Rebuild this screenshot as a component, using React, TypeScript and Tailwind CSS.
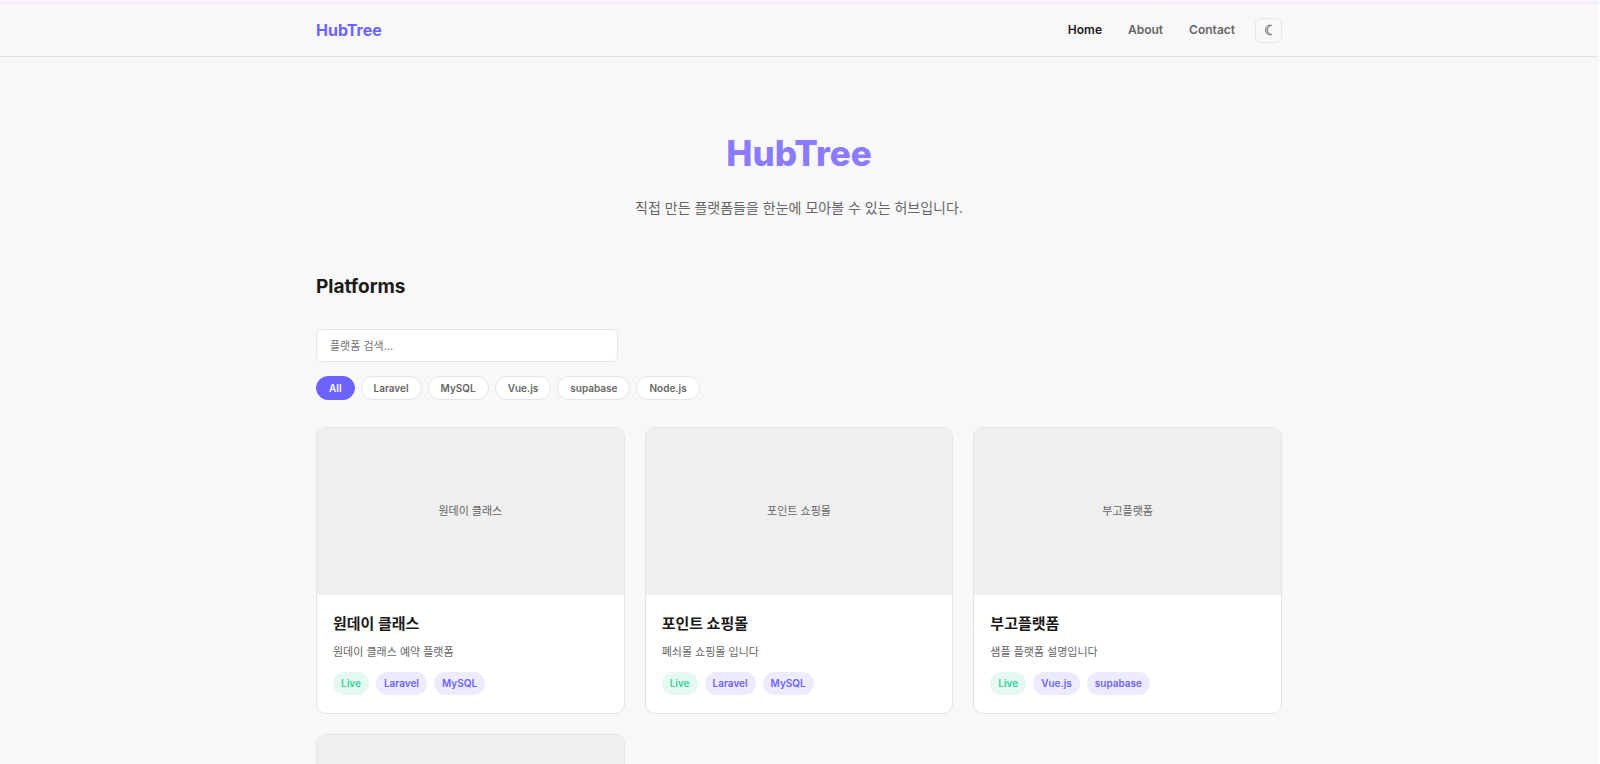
import { useState } from 'react';

type Platform = {
  name: string;
  description: string;
  tags: string[];
};

const navLinks = ['Home', 'About', 'Contact'];

const filters = ['All', 'Laravel', 'MySQL', 'Vue.js', 'supabase', 'Node.js'];

const platforms: Platform[] = [
  { name: '원데이 클래스', description: '원데이 클래스 예약 플랫폼', tags: ['Laravel', 'MySQL'] },
  { name: '포인트 쇼핑몰', description: '폐쇠몰 쇼핑몰 입니다', tags: ['Laravel', 'MySQL'] },
  { name: '부고플랫폼', description: '샘플 플랫폼 설명입니다', tags: ['Vue.js', 'supabase'] },
];

const Header = () => {
  return (
    <header className="border-b border-[#e2e2e2]">
      <div className="mx-auto flex h-13 max-w-[966px] items-center justify-between">
        <a href="#" className="text-base font-bold text-[#6c63ff]">
          HubTree
        </a>
        <div className="flex items-center gap-5">
          <nav className="flex items-center gap-[26px]">
            {navLinks.map((link) => (
              <a
                key={link}
                href="#"
                className={`text-xs font-semibold ${link === 'Home' ? 'text-[#1a1a1a]' : 'text-[#666666]'}`}
              >
                {link}
              </a>
            ))}
          </nav>
          <button
            type="button"
            aria-label="Toggle theme"
            className="grid h-[25px] w-[27px] place-items-center rounded-md border border-[#e5e5e5] text-[#666666]"
          >
            <svg viewBox="0 0 12 12" className="size-3" fill="currentColor" fillOpacity="0.35" stroke="currentColor" strokeWidth="0.8">
              <path d="M8.600 1.300C5 .5 2.500 2.900 2.500 6s2.500 5.500 6.100 4.700C6 10 4.600 8.300 4.600 6S6 2 8.600 1.300Z" />
            </svg>
          </button>
        </div>
      </div>
    </header>
  );
};

const PlatformCard = ({ name, description, tags }: Platform) => {
  return (
    <article className="overflow-hidden rounded-[10px] border border-[#e4e4e4] bg-white">
      <div className="grid h-[167px] place-items-center bg-[#efefef] text-[11px] text-[#666666]">{name}</div>
      <div className="px-4 pt-[18px] pb-[18px]">
        <h3 className="text-[15px] leading-[22px] font-bold text-[#1a1a1a]">{name}</h3>
        <p className="mt-2 text-[11px] leading-[18px] text-[#666666]">{description}</p>
        <div className="mt-[11px] flex gap-[7px] text-[10px] leading-[23px] font-semibold">
          <span className="rounded-full bg-[#e5f9f1] px-2 text-[#34d399]">Live</span>
          {tags.map((tag) => (
            <span key={tag} className="rounded-full bg-[#edebff] px-2 text-[#6c63ff]">
              {tag}
            </span>
          ))}
        </div>
      </div>
    </article>
  );
};

const App = () => {
  const [active, setActive] = useState('All');

  return (
    <div className="h-screen overflow-hidden border-t-2 border-r-2 border-t-[#fcf4ff] border-r-[#fcfcfc] bg-[#f8f8f8] font-['Inter','Noto_Sans_CJK_KR',sans-serif]">
      <div className="h-0.5 bg-[#f2ecf4]" />
      <Header />
      <main className="mx-auto max-w-[966px]">
        <section className="pt-[74px] text-center">
          <h1 className="text-[35px] leading-11 font-extrabold text-[#8b7bff]">HubTree</h1>
          <p className="mt-[21px] text-sm leading-6 text-[#666666]">
            직접 만든 플랫폼들을 한눈에 모아볼 수 있는 허브입니다.
          </p>
        </section>

        <section className="pt-[51px]">
          <h2 className="text-[19px] leading-8 font-bold text-[#1a1a1a]">Platforms</h2>
          <input
            type="search"
            aria-label="플랫폼 검색"
            placeholder="플랫폼 검색..."
            className="mt-[26px] block h-[33px] w-full max-w-[302px] rounded-md border border-[#e5e5e5] bg-white px-[13px] text-[11px] text-[#1a1a1a] outline-none placeholder:text-[#757575]"
          />
          <div className="mt-[14px] flex gap-1.5">
            {filters.map((filter) => (
              <button
                key={filter}
                type="button"
                onClick={() => setActive(filter)}
                className={`h-6 rounded-full border px-3 text-[10px] font-semibold ${
                  filter === active
                    ? 'border-[#6c63ff] bg-[#6c63ff] text-white'
                    : 'border-[#e5e5e5] bg-white text-[#666666]'
                }`}
              >
                {filter}
              </button>
            ))}
          </div>
          <div className="mt-[27px] grid grid-cols-3 gap-5">
            {platforms.map((platform) => (
              <PlatformCard key={platform.name} {...platform} />
            ))}
            <article className="overflow-hidden rounded-[10px] border border-[#e4e4e4] bg-white">
              <div className="h-[167px] bg-[#efefef]" />
            </article>
          </div>
        </section>
      </main>
    </div>
  );
};

export default App;
